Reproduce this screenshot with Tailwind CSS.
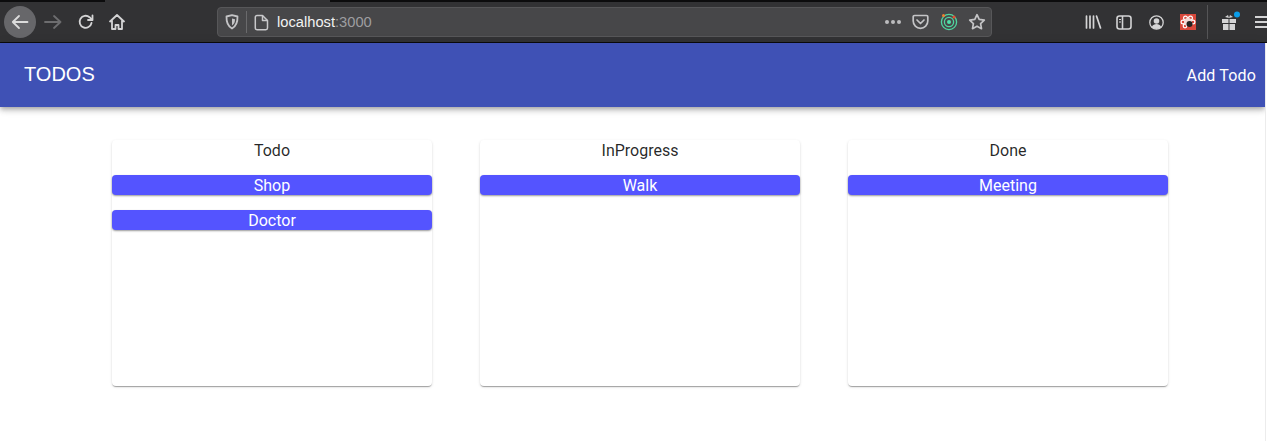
<!DOCTYPE html>
<html>
<head>
<meta charset="utf-8">
<script src="https://cdn.jsdelivr.net/npm/@tailwindcss/browser@4"></script>
</head>
<body class="bg-white overflow-hidden font-['Roboto',sans-serif]">
<div class="relative w-[1267px] h-[441px] overflow-hidden flex flex-col bg-white">
  <!-- Browser toolbar -->
  <div class="relative h-[43px] shrink-0 bg-[#323234] border-b border-b-[#0c0c0d] flex items-center text-[#d4d4d5]">
    <div class="absolute left-0 top-0 w-[105px] h-[2px] bg-[#0c0c0d]"></div>
    <div class="absolute left-[330px] top-0 right-0 h-[2px] bg-[#0c0c0d]"></div>
    <div class="flex items-center ml-[4px] mt-[2px]">
      <div class="w-8 h-8 rounded-full bg-[#67676a] flex items-center justify-center">
        <svg width="18" height="18" viewBox="0 0 18 18" fill="none" stroke="#dcdcdc" stroke-width="1.800" stroke-linecap="round" stroke-linejoin="round"><path d="M16.500 9H1.800M8 3L1.800 9 8 15"/></svg>
      </div>
      <svg class="ml-[8px]" width="18" height="18" viewBox="0 0 18 18" fill="none" stroke="#6d6d6f" stroke-width="1.800" stroke-linecap="round" stroke-linejoin="round"><path d="M1 9h15.500M10 3l6.500 6-6.500 6"/></svg>
      <svg class="ml-[15px]" width="18" height="18" viewBox="0 0 18 18" fill="none" stroke="#d4d4d5" stroke-width="1.800" stroke-linecap="round" stroke-linejoin="round"><path d="M14.500 10A6 6 0 1 1 12.500 4.200L15 6.500"/><path d="M15.500 2.500v4.500H11"/></svg>
      <svg class="ml-[13px]" width="18" height="18" viewBox="0 0 18 18" fill="none" stroke="#d4d4d5" stroke-width="1.800" stroke-linejoin="round"><path d="M1.500 9L9 2l7.500 7M4 7.500V16h3.500v-4h3v4H14V7.500"/></svg>
    </div>
    <div class="absolute left-[217px] top-[7px] w-[775px] h-[30px] rounded-[4px] bg-[#474749] border border-[#575759] flex items-center">
      <svg class="ml-[7px]" width="14" height="16" viewBox="0 0 14 16" fill="none" stroke="#c4c4c6" stroke-width="1.800" stroke-linejoin="round"><path d="M1.500 2.500L7 1.200l5.500 1.300c.2 5.500-1 9.500-5.500 12C2.500 12 1.300 8 1.500 2.500z"/><path d="M7 4.500l3 .7c0 2.800-.8 4.800-3 6.200z" fill="#c4c4c6" stroke="none"/></svg>
      <div class="ml-[7px] w-px h-[22px] bg-[#6a6a6c]"></div>
      <svg class="ml-[7px]" width="15" height="17" viewBox="0 0 15 17" fill="none" stroke="#c8c8ca" stroke-width="1.500" stroke-linejoin="round"><path d="M3 1.500h5.500l5 5V14a1.700 1.700 0 0 1-1.700 1.700H3A1.700 1.700 0 0 1 1.300 14V3.200A1.700 1.700 0 0 1 3 1.500z"/><path d="M8.500 1.500v5h5"/></svg>
      <span class="ml-[8px] text-[14.7px] leading-none font-['Liberation_Sans',sans-serif] text-[#f2f2f2]">localhost<span class="text-[#9e9ea0]">:3000</span></span>
      <div class="ml-auto flex items-center">
        <div class="flex gap-[2px]"><i class="block w-[4px] h-[4px] rounded-full bg-[#bcbcbe]"></i><i class="block w-[4px] h-[4px] rounded-full bg-[#bcbcbe]"></i><i class="block w-[4px] h-[4px] rounded-full bg-[#bcbcbe]"></i></div>
        <svg class="ml-[11px]" width="17" height="16" viewBox="0 0 17 16" fill="none" stroke="#c4c4c6" stroke-width="1.700" stroke-linecap="round" stroke-linejoin="round"><path d="M2.500 1.500h12A1.300 1.300 0 0 1 15.800 2.800V7A7.300 7.300 0 0 1 1.200 7V2.800A1.300 1.300 0 0 1 2.500 1.500z"/><path d="M5 6l3.500 3.500L12 6"/></svg>
        <svg class="ml-[11px]" width="18" height="18" viewBox="0 0 18 18" fill="none"><circle cx="9" cy="9" r="7.600" stroke="#4fd6a0" stroke-width="1.300"/><circle cx="9" cy="9" r="4.600" stroke="#4fd6a0" stroke-width="1.300"/><circle cx="9" cy="9" r="2" fill="#4fe0a8"/><circle cx="3.500" cy="2.500" r="1.500" fill="#f08030"/><circle cx="14" cy="4" r="1.500" fill="#e8502f"/></svg>
        <svg class="ml-[10px] mr-[5px]" width="18" height="18" viewBox="0 0 18 18" fill="none" stroke="#c4c4c6" stroke-width="1.700" stroke-linejoin="round"><path d="M9 1.700l2.200 4.700 5.100.7-3.700 3.500.9 5.100L9 13.200l-4.500 2.500.9-5.100L1.700 7.100l5.100-.7z"/></svg>
      </div>
    </div>
    <div class="absolute left-[1085px] top-[14px] flex items-center">
      <svg width="17" height="16" viewBox="0 0 17 16" fill="none" stroke="#d4d4d5" stroke-width="1.700" stroke-linecap="round"><path d="M1.500 2v12M5 2v12M8.500 2v12M11.500 2l4 12"/></svg>
      <svg class="ml-[14px]" width="16" height="15" viewBox="0 0 16 15" fill="none" stroke="#d4d4d5" stroke-width="1.600"><rect x="1" y="1" width="14" height="13" rx="2.500"/><path d="M6.500 1v13"/><path d="M3 4.500h2M3 7h2" stroke-width="1.200"/></svg>
      <svg class="ml-[17px]" width="15" height="15" viewBox="0 0 15 15" fill="none"><circle cx="7.500" cy="7.500" r="6.700" stroke="#d4d4d5" stroke-width="1.300"/><circle cx="7.500" cy="6" r="2.800" fill="#d4d4d5"/><path d="M2.800 12c1-2.200 2.800-3 4.700-3s3.700.8 4.700 3a6.500 6.500 0 0 1-9.400 0z" fill="#d4d4d5"/></svg>
      <div class="ml-[16px] w-4 h-4 bg-[#d9483b] relative overflow-hidden">
        <svg width="16" height="16" viewBox="0 0 16 16" fill="none" stroke="#fff" stroke-width="1.200"><circle cx="5.500" cy="4" r="1.900"/><circle cx="10.500" cy="4" r="1.900"/><circle cx="3" cy="8" r="1.900"/><circle cx="13" cy="8" r="1.900"/><circle cx="5" cy="12" r="1.800"/><circle cx="8" cy="8" r="4" fill="#f3d8d4" stroke="none"/><ellipse cx="9.500" cy="10" rx="3" ry="3" fill="#222" stroke="none"/></svg>
      </div>
    </div>
    <div class="absolute left-[1207px] top-[5px] w-px h-[34px] bg-[#555557]"></div>
    <svg class="absolute left-[1221px] top-[11px]" width="20" height="20" viewBox="0 0 20 20"><path d="M1 8h6.500v4H1zM8.500 8H15v4H8.500zM2 13h5.500v6H2zM8.500 13H14v6H8.500z" fill="#d4d4d5"/><path d="M4 6l3-2 1 3zM12 6l-3-2-1 3z" fill="#d4d4d5"/><circle cx="16" cy="3.500" r="3" fill="#0a9dea"/></svg>
    <div class="absolute left-[1255px] top-[16px] w-[12px] h-[12px] flex flex-col justify-between">
      <i class="block h-[2px] bg-[#d4d4d5]"></i><i class="block h-[2px] bg-[#d4d4d5]"></i><i class="block h-[2px] bg-[#d4d4d5]"></i>
    </div>
  </div>

  <div class="flex-1 flex flex-col w-[1265px] overflow-visible">
    <!-- App bar -->
    <header class="relative h-16 shrink-0 bg-[#3f51b5] text-white flex items-center justify-between pl-[24px] pr-[9px] shadow-[0_2px_4px_-1px_rgba(0,0,0,0.2),0_4px_5px_0_rgba(0,0,0,0.14),0_1px_10px_0_rgba(0,0,0,0.12)]">
      <h1 class="text-[20px] leading-[1.6] font-normal font-['Liberation_Sans',sans-serif] pb-[2px]">TODOS</h1>
      <button class="text-[16px] tracking-[0.01em] leading-none pt-[1px]">Add Todo</button>
    </header>

    <!-- Board -->
    <main class="flex gap-[48px] pl-[112px] pt-[33px]">
      <section class="w-[320px] h-[246px] rounded-[4px] bg-white shadow-[0_2px_1px_-1px_rgba(0,0,0,0.2),0_1px_1px_0_rgba(0,0,0,0.14),0_1px_3px_0_rgba(0,0,0,0.12)] flex flex-col text-center">
        <h2 class="h-[20px] text-[16px] leading-[22px] font-normal text-black/85">Todo</h2>
        <div class="flex flex-col gap-[15px] mt-[15px]">
          <div class="h-[20px] rounded-[4px] bg-[#5454ff] text-white text-[16px] leading-[22px] shadow-[0_1px_2px_rgba(0,0,0,0.4)]">Shop</div>
          <div class="h-[20px] rounded-[4px] bg-[#5454ff] text-white text-[16px] leading-[22px] shadow-[0_1px_2px_rgba(0,0,0,0.4)]">Doctor</div>
        </div>
      </section>
      <section class="w-[320px] h-[246px] rounded-[4px] bg-white shadow-[0_2px_1px_-1px_rgba(0,0,0,0.2),0_1px_1px_0_rgba(0,0,0,0.14),0_1px_3px_0_rgba(0,0,0,0.12)] flex flex-col text-center">
        <h2 class="h-[20px] text-[16px] leading-[22px] font-normal text-black/85">InProgress</h2>
        <div class="flex flex-col gap-[15px] mt-[15px]">
          <div class="h-[20px] rounded-[4px] bg-[#5454ff] text-white text-[16px] leading-[22px] shadow-[0_1px_2px_rgba(0,0,0,0.4)]">Walk</div>
        </div>
      </section>
      <section class="w-[320px] h-[246px] rounded-[4px] bg-white shadow-[0_2px_1px_-1px_rgba(0,0,0,0.2),0_1px_1px_0_rgba(0,0,0,0.14),0_1px_3px_0_rgba(0,0,0,0.12)] flex flex-col text-center">
        <h2 class="h-[20px] text-[16px] leading-[22px] font-normal text-black/85">Done</h2>
        <div class="flex flex-col gap-[15px] mt-[15px]">
          <div class="h-[20px] rounded-[4px] bg-[#5454ff] text-white text-[16px] leading-[22px] shadow-[0_1px_2px_rgba(0,0,0,0.4)]">Meeting</div>
        </div>
      </section>
    </main>
  </div>
  <!-- Window edge over the page, beside the clipped app bar -->
  <div class="absolute left-[1265px] top-[43px] bottom-0 w-[2px] bg-white border-l border-l-[#ececec]"></div>
</div>
</body>
</html>
